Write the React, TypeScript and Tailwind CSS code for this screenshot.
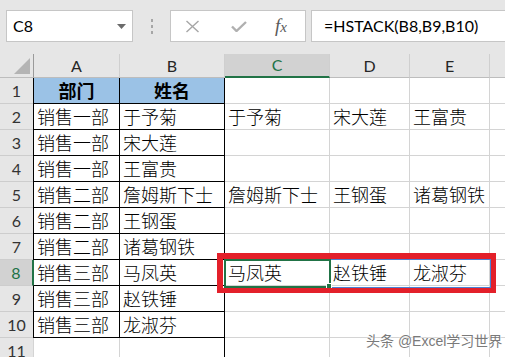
import React from "react";

const LAT = "font-['Lato','Liberation_Sans',sans-serif]";
const CJK = "font-['Noto_Sans_CJK_SC',sans-serif]";

type Row = { n: number; a: string; b: string; c?: string; d?: string; e?: string };

const rows: Row[] = [
  { n: 1, a: "部门", b: "姓名" },
  { n: 2, a: "销售一部", b: "于予菊", c: "于予菊", d: "宋大莲", e: "王富贵" },
  { n: 3, a: "销售一部", b: "宋大莲" },
  { n: 4, a: "销售一部", b: "王富贵" },
  { n: 5, a: "销售二部", b: "詹姆斯下士", c: "詹姆斯下士", d: "王钢蛋", e: "诸葛钢铁" },
  { n: 6, a: "销售二部", b: "王钢蛋" },
  { n: 7, a: "销售二部", b: "诸葛钢铁" },
  { n: 8, a: "销售三部", b: "马凤英", c: "马凤英", d: "赵铁锤", e: "龙淑芬" },
  { n: 9, a: "销售三部", b: "赵铁锤" },
  { n: 10, a: "销售三部", b: "龙淑芬" },
  { n: 11, a: "", b: "" },
];

function DataRow({ r }: { r: Row }) {
  const boxed = r.n <= 10;
  const sel = r.n === 8;
  const head = r.n === 1;
  return (
    <div className="flex h-[26px]">
      <div
        className={
          "w-[33px] shrink-0 flex items-center justify-center border-b border-[#cdcdcd] text-[16px] " +
          LAT +
          (sel ? " bg-[#d2d2d2] text-[#217346] border-r border-r-[#217346]" : " bg-[#e6e6e6] text-[#333]")
        }
      >
        {r.n}
      </div>
      {head ? (
        <>
          <div className={"w-[87px] shrink-0 flex items-center justify-center border-l border-r border-b border-black bg-[#9bc2e6] font-bold text-[18px] text-black " + CJK}>
            {r.a}
          </div>
          <div className={"w-[105px] shrink-0 flex items-center justify-center border-r border-b border-black bg-[#9bc2e6] font-bold text-[18px] text-black " + CJK}>
            {r.b}
          </div>
        </>
      ) : (
        <>
          <div
            className={
              "w-[87px] shrink-0 flex items-center pl-[3px] border-r border-b text-[18px] font-light text-black whitespace-nowrap " +
              CJK +
              (boxed ? " border-black border-l" : " border-[#d4d4d4] border-l border-l-[#d4d4d4]") +
              (sel ? " border-l-[#217346]" : "")
            }
          >
            {r.a}
          </div>
          <div
            className={
              "w-[105px] shrink-0 flex items-center pl-[3px] border-r border-b text-[18px] font-light text-black whitespace-nowrap " +
              CJK +
              (boxed ? " border-black" : " border-[#d4d4d4] border-r-black")
            }
          >
            {r.b}
          </div>
        </>
      )}
      <div className={"w-[105px] shrink-0 flex items-center pl-[3px] border-r border-b border-[#d4d4d4] text-[18px] font-light text-black whitespace-nowrap bg-white " + CJK}>
        {r.c ?? ""}
      </div>
      <div className={"w-[80px] shrink-0 flex items-center pl-[3px] border-r border-b border-[#d4d4d4] text-[18px] font-light text-black whitespace-nowrap bg-white " + CJK}>
        {r.d ?? ""}
      </div>
      <div className={"w-[80px] shrink-0 flex items-center pl-[3px] border-r border-b border-[#d4d4d4] text-[18px] font-light text-black whitespace-nowrap bg-white " + CJK}>
        {r.e ?? ""}
      </div>
      <div className="flex-1 border-b border-[#d4d4d4] bg-white" />
    </div>
  );
}

export default function App() {
  return (
    <div className="relative w-[505px] h-[357px] overflow-hidden bg-white">
      {/* formula bar */}
      <div className="flex items-start h-[54px] bg-[#e6e6e6] pt-[10px] pl-[6px]">
        <div className="relative w-[127px] h-[32px] shrink-0 bg-white border border-[#c6c6c6] flex items-center">
          <span className={"pl-[6px] text-[16px] text-black " + LAT}>C8</span>
          <svg className="absolute left-[110px] top-[13px]" width="9" height="5" viewBox="0 0 9 5">
            <path d="M0 0 L9 0 L4.5 5 Z" fill="#6b6b6b" />
          </svg>
        </div>
        <div className="w-[37px] h-[32px] shrink-0 flex flex-col items-center justify-center gap-[3px]">
          <div className="w-[2px] h-[3px] bg-[#a6a6a6]" />
          <div className="w-[2px] h-[3px] bg-[#a6a6a6]" />
          <div className="w-[2px] h-[3px] bg-[#a6a6a6]" />
        </div>
        <div className="w-[136px] h-[32px] shrink-0 bg-white border border-[#c6c6c6] flex items-center pl-[14px]">
          <svg width="15" height="13" viewBox="0 0 15 13">
            <path d="M1.5 1 L13.5 12 M13.5 1 L1.5 12" stroke="#a6a6a6" strokeWidth="1.4" fill="none" />
          </svg>
          <svg className="ml-[31px]" width="16" height="11" viewBox="0 0 16 11">
            <path d="M1 5.5 L5.5 10 L15 1" stroke="#b0b0b0" strokeWidth="2.4" fill="none" />
          </svg>
          <span className="ml-[28px] text-[19px] italic text-[#5a5a5a] font-['Liberation_Serif',serif] leading-none pb-[2px]">
            f<span className="text-[15px]">x</span>
          </span>
        </div>
        <div className="ml-[5px] flex-1 h-[32px] bg-white border border-r-0 border-[#c6c6c6] flex items-center pl-[12px]">
          <span className={"text-[16px] text-black whitespace-nowrap " + LAT}>=HSTACK(B8,B9,B10)</span>
        </div>
      </div>

      {/* column headers */}
      <div className={"flex h-[24px] bg-[#e6e6e6] text-[16px] text-[#262626] " + LAT}>
        <div className="relative w-[34px] shrink-0 border-r border-b border-r-[#9a9a9a] border-b-[#bdbdbd]">
          <svg className="absolute left-[14px] top-[4px]" width="16" height="16" viewBox="0 0 16 16">
            <path d="M16 0 L16 16 L0 16 Z" fill="#b4b4b4" />
          </svg>
        </div>
        <div className="w-[86px] shrink-0 flex items-center justify-center border-r border-b border-r-[#cfcfcf] border-b-[#bdbdbd]">A</div>
        <div className="w-[105px] shrink-0 flex items-center justify-center border-r border-b border-r-[#cfcfcf] border-b-[#bdbdbd]">B</div>
        <div className="w-[105px] shrink-0 flex items-center justify-center border-r border-r-[#cfcfcf] border-b-2 border-b-[#217346] bg-[#d2d2d2] text-[#217346]">C</div>
        <div className="w-[80px] shrink-0 flex items-center justify-center border-r border-b border-r-[#cfcfcf] border-b-[#bdbdbd]">D</div>
        <div className="w-[80px] shrink-0 flex items-center justify-center border-r border-b border-r-[#cfcfcf] border-b-[#bdbdbd]">E</div>
        <div className="flex-1 border-b border-b-[#bdbdbd]" />
      </div>

      {/* grid */}
      {rows.map((r) => (
        <DataRow key={r.n} r={r} />
      ))}

      {/* spill range outline */}
      <div className="absolute left-[224px] top-[259px] w-[267px] h-[29px] border border-[#4a7fd4]" />
      {/* active cell */}
      <div className="absolute left-[224px] top-[259px] w-[107px] h-[29px] border-2 border-[#217346]" />
      <div className="absolute left-[326px] top-[283px] w-[6px] h-[6px] bg-[#217346] border border-white" />
      {/* red annotation */}
      <div className="absolute left-[217px] top-[253px] w-[279px] h-[40px] border-[5px] border-l-[6px] border-t-[6px] border-[#e3202a]" />

      {/* watermark */}
      <div className="absolute left-[366px] top-[331px] text-[14px] text-[#7a7a7a] whitespace-nowrap font-['Liberation_Sans','Noto_Sans_CJK_SC',sans-serif] [text-shadow:0_0_2px_#fff,0_0_2px_#fff]">
        头条 @Excel学习世界
      </div>
    </div>
  );
}
